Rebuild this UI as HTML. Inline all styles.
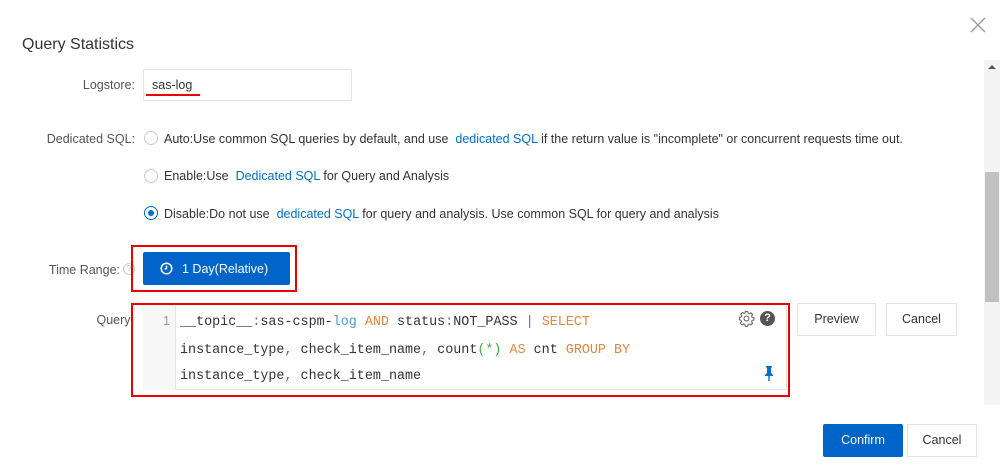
<!DOCTYPE html>
<html><head><style>
body{margin:0;width:1000px;height:472px;background:#fff;font-family:"Liberation Sans",sans-serif;color:#333;position:relative;overflow:hidden;font-size:12.5px}
.a{position:absolute;white-space:nowrap}
.lbl{color:#555;text-align:right}
.link{color:#0070cc}
.radio{position:absolute;width:14px;height:14px;border:1px solid #ccc;border-radius:50%;box-sizing:border-box;background:#fff}
.btn{position:absolute;border:1px solid #e3e3e3;background:#fff;box-sizing:border-box;text-align:center;color:#333;font-size:12.5px}
.mono{font-family:"Liberation Mono",monospace;font-size:13.4px;color:#333}
.o{color:#e8853d}.b{color:#3b6fd6}.g{color:#3cb043}.lb{color:#4a9bd0}
</style></head><body>
<div class="a" style="left:22px;top:36px;font-size:16px;color:#333">Query Statistics</div>
<svg class="a" style="left:970px;top:17px" width="16" height="16"><path d="M1 1L15 15M15 1L1 15" stroke="#999" stroke-width="1.3"/></svg>
<div class="a" style="left:984px;top:60px;width:16px;height:345px;background:#f4f4f4"></div>
<div class="a" style="left:985px;top:172px;width:14px;height:130px;background:#c1c1c1"></div>
<svg class="a" style="left:988px;top:64px" width="8" height="6"><path d="M0 5L4 1L8 5Z" fill="#555"/></svg>

<div class="a lbl" style="left:40px;width:95px;top:78px">Logstore:</div>
<div class="a" style="left:143px;top:69px;width:209px;height:32px;border:1px solid #e3e3e3;box-sizing:border-box"></div>
<div class="a" style="left:152px;top:78px;color:#333">sas-log</div>
<div class="a" style="left:146px;top:94px;width:54px;height:2px;background:#e00"></div>

<div class="a lbl" style="left:30px;width:105px;top:132px">Dedicated SQL:</div>
<div class="radio" style="left:144px;top:131px"></div>
<div class="a" style="left:164px;top:132px">Auto:Use common SQL queries by default, and use <span class="link">&nbsp;dedicated SQL</span> if the return value is "incomplete" or concurrent requests time out.</div>
<div class="radio" style="left:144px;top:169px"></div>
<div class="a" style="left:164px;top:169px">Enable:Use <span class="link">&nbsp;Dedicated SQL</span> for Query and Analysis</div>
<div class="radio" style="left:144px;top:206px;border-color:#0070cc"></div>
<div class="a" style="left:148px;top:210px;width:6px;height:6px;border-radius:50%;background:#0070cc"></div>
<div class="a" style="left:164px;top:207px">Disable:Do not use <span class="link">&nbsp;dedicated SQL</span> for query and analysis. Use common SQL for query and analysis</div>

<div class="a lbl" style="left:30px;width:90px;top:263px">Time Range:</div>
<div class="a" style="left:123px;top:263px;width:10px;height:10px;border:1px solid #ccc;border-radius:50%;font-size:8px;color:#bbb;text-align:center;line-height:10px">?</div>
<div class="a" style="left:131px;top:245px;width:166px;height:47px;border:2px solid #e00;box-sizing:border-box"></div>
<div class="a" style="left:143px;top:252px;width:147px;height:33px;background:#0064c8;border-radius:2px"></div>
<svg class="a" style="left:160px;top:262px" width="13" height="13"><circle cx="6.5" cy="6.5" r="5.3" fill="none" stroke="#fff" stroke-width="1.5"/><path d="M6.5 3.5V6.8H4.5" fill="none" stroke="#fff" stroke-width="1.4"/></svg>
<div class="a" style="left:182px;top:262px;color:#fff">1 Day(Relative)</div>

<div class="a lbl" style="left:40px;width:94px;top:313px">Query:</div>
<div class="a" style="left:131px;top:303px;width:659px;height:94px;border:2px solid #e00;box-sizing:border-box"></div>
<div class="a" style="left:143px;top:305px;width:644px;height:85px;border:1px solid #e3e3e3;border-top:none;box-sizing:border-box"></div>
<div class="a" style="left:143px;top:305px;width:32px;height:85px;background:#f7f7f7;border-right:1px solid #e6e6e6"></div>
<div class="a" style="left:163px;top:314px;color:#999">1</div>
<div class="a mono" style="left:180px;top:315px">__topic__<span class="b">:</span>sas-cspm-<span class="lb">log</span> <span class="o">AND</span> status<span class="b">:</span>NOT_PASS <span class="b">|</span> <span class="o">SELECT</span></div>
<div class="a mono" style="left:180px;top:343px">instance_type<span class="b">,</span> check_item_name<span class="b">,</span> count<span class="g">(*)</span> <span class="o">AS</span> cnt <span class="o">GROUP BY</span></div>
<div class="a mono" style="left:180px;top:369px">instance_type<span class="b">,</span> check_item_name</div>
<svg class="a" style="left:738px;top:310px" width="17" height="17" viewBox="0 0 24 24"><path d="M12 8.5a3.5 3.5 0 1 0 0 7a3.5 3.5 0 1 0 0-7zM10.3 2h3.4l.5 2.6 1.8.8 2.2-1.5 2.4 2.4-1.5 2.2.8 1.8 2.6.5v3.4l-2.6.5-.8 1.8 1.5 2.2-2.4 2.4-2.2-1.5-1.8.8-.5 2.6h-3.4l-.5-2.6-1.8-.8-2.2 1.5-2.4-2.4 1.5-2.2-.8-1.8L2 13.7v-3.4l2.6-.5.8-1.8-1.5-2.2 2.4-2.4 2.2 1.5 1.8-.8z" fill="none" stroke="#666" stroke-width="1.5"/></svg>
<div class="a" style="left:760px;top:311px;width:15px;height:15px;border-radius:50%;background:#555;color:#fff;font-size:11px;font-weight:bold;text-align:center;line-height:15px">?</div>
<svg class="a" style="left:764px;top:366px" width="10" height="15"><path d="M2 0H8V1.5H7V7L9 9V10H5.7V15H4.3V10H1V9L3 7V1.5H2Z" fill="#0070cc"/></svg>

<div class="btn" style="left:797px;top:303px;width:79px;height:33px;line-height:31px">Preview</div>
<div class="btn" style="left:886px;top:303px;width:71px;height:33px;line-height:31px">Cancel</div>

<div class="a" style="left:823px;top:424px;width:80px;height:33px;background:#0064c8;border-radius:2px;color:#fff;text-align:center;line-height:33px">Confirm</div>
<div class="btn" style="left:907px;top:424px;width:70px;height:33px;line-height:31px">Cancel</div>
</body></html>
